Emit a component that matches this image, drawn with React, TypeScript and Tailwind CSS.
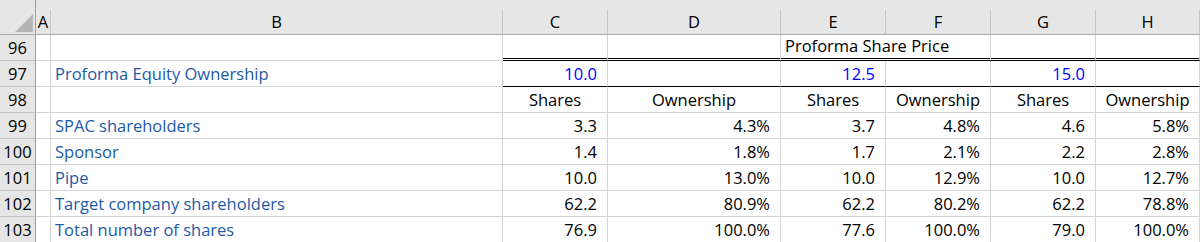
import React from 'react';

type Align = 'left' | 'right' | 'center';

interface CellProps {
  children?: React.ReactNode;
  align?: Align;
  bottom?: 'grid' | 'double' | 'black';
  noRight?: boolean;
  tone?: 'label' | 'input' | 'plain';
}

const Cell = ({ children, align = 'right', bottom = 'grid', noRight, tone = 'plain' }: CellProps) => {
  const justify =
    align === 'left' ? 'justify-start pl-[4px]' : align === 'center' ? 'justify-center' : 'justify-end pr-[10px]';
  const border =
    bottom === 'double'
      ? 'border-b-[3px] border-double border-b-black'
      : bottom === 'black'
      ? 'border-b border-b-black'
      : 'border-b border-b-[#d4d4d4]';
  const right = noRight ? '' : 'border-r border-r-[#d4d4d4]';
  const color = tone === 'label' ? 'text-[#1d5aa6]' : tone === 'input' ? 'text-[#0000ff]' : 'text-black';
  return (
    <div className={`h-[26px] flex items-end pb-[2px] whitespace-nowrap overflow-visible ${justify} ${border} ${right} ${color}`}>
      {children}
    </div>
  );
};

const RowHead = ({ n }: { n: number }) => (
  <div className="h-[26px] flex items-end justify-center pb-[2px] bg-[#e6e6e6] border-r border-r-[#9e9e9e] border-b border-b-[#c4c4c4] text-black">
    {n}
  </div>
);

const ColHead = ({ letter }: { letter: string }) => (
  <div className="h-[35px] bg-[#e6e6e6] border-b border-b-[#ababab] flex flex-col">
    <div className="mt-[10px] flex-1 flex items-center justify-center border-r border-r-[#c6c6c6] text-black">
      {letter}
    </div>
  </div>
);

const rows = [
  { n: 99, label: 'SPAC shareholders', vals: ['3.3', '4.3%', '3.7', '4.8%', '4.6', '5.8%'] },
  { n: 100, label: 'Sponsor', vals: ['1.4', '1.8%', '1.7', '2.1%', '2.2', '2.8%'] },
  { n: 101, label: 'Pipe', vals: ['10.0', '13.0%', '10.0', '12.9%', '10.0', '12.7%'] },
  { n: 102, label: 'Target company shareholders', vals: ['62.2', '80.9%', '62.2', '80.2%', '62.2', '78.8%'] },
  { n: 103, label: 'Total number of shares', vals: ['76.9', '100.0%', '77.6', '100.0%', '79.0', '100.0%'] },
];

export default function App() {
  return (
    <div className="w-[1200px] h-[242px] overflow-hidden bg-white font-['Open_Sans',sans-serif] text-[16.5px] leading-[20px]">
      <div className="grid grid-cols-[36px_15px_452px_105px_173px_105px_105px_105px_104px]">
        {/* column headers */}
        <div className="h-[35px] bg-[#e6e6e6] border-b border-b-[#ababab] border-r border-r-[#9e9e9e] flex items-end justify-end pr-[2px] pb-[2px]">
          <svg width="18" height="18" viewBox="0 0 18 18">
            <polygon points="18,0 18,18 0,18" fill="#b4b4b4" />
          </svg>
        </div>
        {['A', 'B', 'C', 'D', 'E', 'F', 'G', 'H'].map((l) => (
          <ColHead key={l} letter={l} />
        ))}

        {/* 96 */}
        <RowHead n={96} />
        <Cell />
        <Cell />
        <Cell bottom="double" />
        <Cell bottom="double" />
        <Cell align="left" bottom="double" noRight>
          Proforma Share Price
        </Cell>
        <Cell bottom="double" />
        <Cell bottom="double" />
        <Cell bottom="double" />

        {/* 97 */}
        <RowHead n={97} />
        <Cell />
        <Cell align="left" tone="label">
          Proforma Equity Ownership
        </Cell>
        <Cell bottom="black" tone="input">10.0</Cell>
        <Cell bottom="black" />
        <Cell bottom="black" tone="input">12.5</Cell>
        <Cell bottom="black" />
        <Cell bottom="black" tone="input">15.0</Cell>
        <Cell bottom="black" />

        {/* 98 */}
        <RowHead n={98} />
        <Cell />
        <Cell />
        <Cell align="center">Shares</Cell>
        <Cell align="center">Ownership</Cell>
        <Cell align="center">Shares</Cell>
        <Cell align="center">Ownership</Cell>
        <Cell align="center">Shares</Cell>
        <Cell align="center">Ownership</Cell>

        {rows.map((r) => (
          <React.Fragment key={r.n}>
            <RowHead n={r.n} />
            <Cell />
            <Cell align="left" tone="label">
              {r.label}
            </Cell>
            {r.vals.map((v, i) => (
              <Cell key={i}>{v}</Cell>
            ))}
          </React.Fragment>
        ))}
      </div>
    </div>
  );
}
